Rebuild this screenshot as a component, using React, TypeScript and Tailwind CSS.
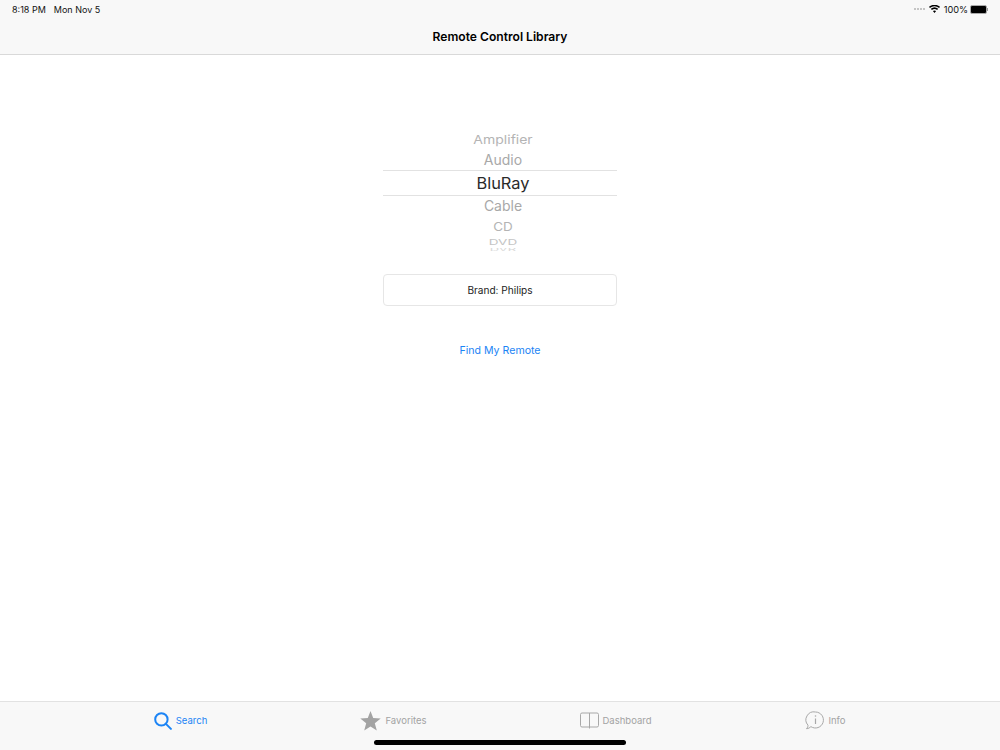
const font = { fontFamily: '"Inter", "Liberation Sans", sans-serif' };

function SearchIcon() {
  return (
    <svg width="18" height="18" viewBox="0 0 18 18" fill="none" stroke="#1c84f5" strokeWidth="2" strokeLinecap="round">
      <circle cx="7.4" cy="7.4" r="6.2" />
      <path d="M11.9 11.9l5 5" />
    </svg>
  );
}
function StarIcon() {
  return (
    <svg width="21" height="20" viewBox="0 0 21 20" fill="#a3a3a3">
      <path d="M10.5 0l2.7 7.1 7.5.4-5.9 4.7 2 7.3-6.3-4.1-6.3 4.1 2-7.3L.3 7.5l7.5-.4z" />
    </svg>
  );
}
function BookIcon() {
  return (
    <svg width="19" height="17" viewBox="0 0 19 17" fill="none" stroke="#a8a8a8" strokeWidth="1">
      <rect x="0.5" y="1" width="18" height="14" rx="1.5" />
      <path d="M9.5 1v15.5" />
    </svg>
  );
}
function InfoIcon() {
  return (
    <svg width="19" height="19" viewBox="0 0 19 19" fill="none" stroke="#a8a8a8" strokeWidth="1">
      <path d="M10.5 1a8 8 0 1 1-4.6 14.6C5 16.6 3.4 17.6 1.5 17.7c.9-.8 1.5-2 1.5-3.5A8 8 0 0 1 10.5 1z" />
      <path d="M10.5 7.5v5.5" strokeWidth="1.2" />
      <circle cx="10.5" cy="5" r="0.8" fill="#a8a8a8" stroke="none" />
    </svg>
  );
}
function WifiIcon() {
  return (
    <svg width="11" height="8" viewBox="0 0 11 8" fill="#000">
      <path d="M5.5 8L3.9 6.1a2.4 2.4 0 0 1 3.2 0zM2.9 5L1.8 3.8a5.7 5.7 0 0 1 7.4 0L8.1 5a4 4 0 0 0-5.2 0zM.9 2.9L0 1.8a8.4 8.4 0 0 1 11 0l-.9 1.1a7 7 0 0 0-9.2 0z" />
    </svg>
  );
}

function Tab({ icon, label, active, width }: { icon: React.ReactNode; label: string; active?: boolean; width: string }) {
  return (
    <div className={`${width} flex items-center justify-center gap-[4px] h-[37px]`}>
      {icon}
      <span className={`text-[9.5px] mt-[2px] ${active ? "text-[#1c84f5]" : "text-[#a3a3a3]"}`}>{label}</span>
    </div>
  );
}

function PickerRow({ text, cls, h }: { text: string; cls: string; h: string }) {
  return (
    <div className={`${h} flex items-center justify-center pl-[6px] overflow-hidden`}>
      <span className={cls}>{text}</span>
    </div>
  );
}

export default function App() {
  return (
    <div className="w-[1000px] h-[750px] bg-white flex flex-col relative overflow-hidden" style={font}>
      <header className="h-[55px] bg-[#f8f8f8] border-b border-[#d9d9d9] flex flex-col shrink-0">
        <div className="h-[18px] pt-[1px] flex items-center justify-between pl-[12px] pr-[12px] text-[9px] text-[#111]">
          <div className="flex gap-[8px]">
            <span>8:18 PM</span>
            <span>Mon Nov 5</span>
          </div>
          <div className="flex items-center gap-[2px]">
            <div className="flex gap-[1px] mr-[2px]">
              <span className="w-[2px] h-[2px] rounded-full bg-[#b5b5b5]" />
              <span className="w-[2px] h-[2px] rounded-full bg-[#b5b5b5]" />
              <span className="w-[2px] h-[2px] rounded-full bg-[#b5b5b5]" />
              <span className="w-[2px] h-[2px] rounded-full bg-[#b5b5b5]" />
            </div>
            <div className="mr-[2px] flex"><WifiIcon /></div>
            <span className="text-[9.2px]">100%</span>
            <div className="flex items-center">
              <div className="w-[17px] h-[9px] rounded-[2px] bg-black border border-[#aaaaaa]" />
              <div className="w-[1px] h-[3px] bg-[#999]" />
            </div>
          </div>
        </div>
        <div className="flex-1 flex items-center justify-center pt-[3px]">
          <h1 className="text-[12.1px] font-semibold text-black">Remote Control Library</h1>
        </div>
      </header>

      <main className="flex-1 flex flex-col items-center pt-[75px]">
        <div className="w-[234px] flex flex-col">
          <PickerRow h="h-[20px] pb-[2px]" text="Amplifier" cls="text-[14px] text-[#b4b4b4] inline-block scale-y-[0.85]" />
          <PickerRow h="h-[20px] pb-[2px]" text="Audio" cls="text-[14px] text-[#a8a8a8]" />
          <div className="h-[26px] border-y border-[#e2e2e2] flex items-center justify-center pl-[6px] pt-[1px]">
            <span className="text-[16.4px] text-[#2a2a2a]">BluRay</span>
          </div>
          <PickerRow h="h-[22px] pb-[3px]" text="Cable" cls="text-[14px] text-[#a8a8a8]" />
          <PickerRow h="h-[19px]" text="CD" cls="text-[13.5px] text-[#b4b4b4] inline-block scale-y-[0.85]" />
          <PickerRow h="h-[11px]" text="DVD" cls="text-[13.5px] text-[#c4c4c4] inline-block scale-y-[0.6]" />
          <PickerRow h="h-[4px]" text="DVR" cls="text-[13px] text-[#d8d8d8] inline-block scale-y-[0.35]" />
        </div>
        <button className="mt-[22px] w-[234px] h-[32px] pt-[1px] bg-white border border-[#e6e6e6] rounded-[4px] text-[10.1px] text-[#222] flex items-center justify-center">
          Brand: Philips
        </button>
        <button className="mt-[37px] h-[16px] text-[10.6px] text-[#1c84f5] flex items-center">Find My Remote</button>
      </main>

      <footer className="h-[49px] bg-[#f8f8f8] border-t border-[#e2e2e2] flex pl-[74px] shrink-0">
        <Tab width="w-[213px]" active icon={<SearchIcon />} label="Search" />
        <Tab width="w-[213px]" icon={<StarIcon />} label="Favorites" />
        <Tab width="w-[231px]" icon={<BookIcon />} label="Dashboard" />
        <Tab width="w-[189px]" icon={<InfoIcon />} label="Info" />
      </footer>
      <div className="absolute left-[374px] top-[740px] w-[252px] h-[5px] rounded-full bg-black" />
    </div>
  );
}
